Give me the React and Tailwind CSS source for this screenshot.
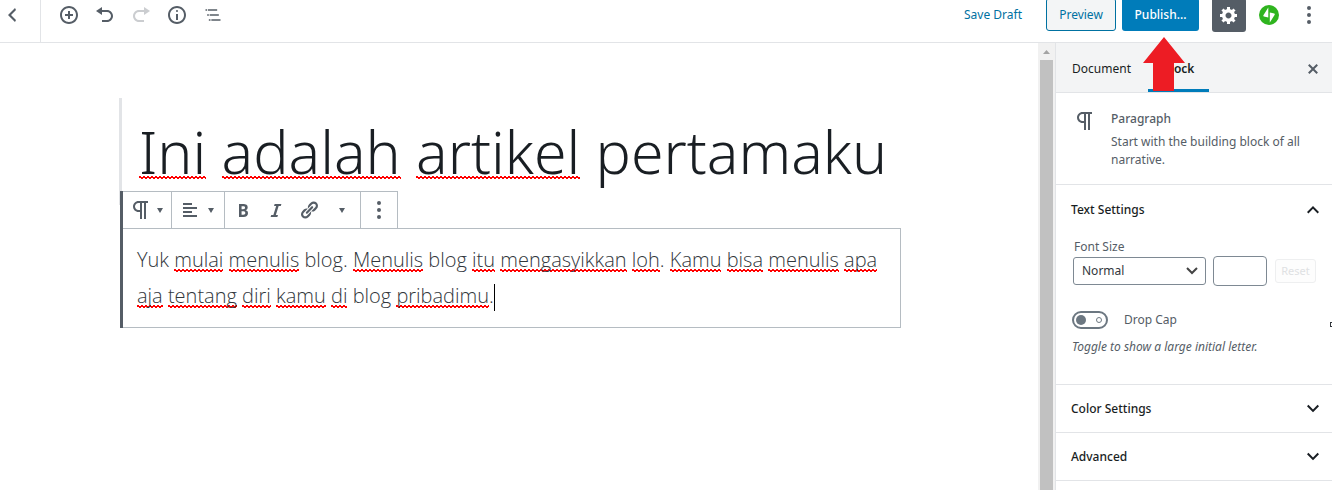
import React, { useState } from 'react';

const icons = {
  back: 'M14 5l-5 5 5 5-1 2-7-7 7-7z',
  insert:
    'M10 1c-5 0-9 4-9 9s4 9 9 9 9-4 9-9-4-9-9-9zm0 16c-3.9 0-7-3.1-7-7s3.1-7 7-7 7 3.1 7 7-3.1 7-7 7zm1-11H9v3H6v2h3v3h2v-3h3V9h-3V6z',
  undo: 'M12 5H7V2L1 6l6 4V7h5c2.2 0 4 1.8 4 4s-1.8 4-4 4H7v2h5c3.3 0 6-2.7 6-6s-2.7-6-6-6z',
  redo: 'M8 5h5V2l6 4-6 4V7H8c-2.2 0-4 1.8-4 4s1.8 4 4 4h5v2H8c-3.3 0-6-2.7-6-6s2.7-6 6-6z',
  info: 'M9 15h2V9H9v6zm1-10c-.5 0-1 .5-1 1s.5 1 1 1 1-.5 1-1-.5-1-1-1zm0-4c-5 0-9 4-9 9s4 9 9 9 9-4 9-9-4-9-9-9zm0 16c-3.9 0-7-3.1-7-7s3.1-7 7-7 7 3.1 7 7-3.1 7-7 7z',
  outline: 'M5 5H3v2h2V5zm3 8h11v-2H8v2zm9-8H6v2h11V5zM7 11H5v2h2v-2zm0 8h2v-2H7v2zm3-2v2h11v-2H10z',
  more: 'M10 1a2 2 0 100 4 2 2 0 000-4zm0 7a2 2 0 100 4 2 2 0 000-4zm0 7a2 2 0 100 4 2 2 0 000-4z',
  settings:
    'M18 12h-2.18c-.17.7-.44 1.35-.81 1.93l1.54 1.54-2.1 2.1-1.54-1.54c-.58.36-1.23.63-1.91.79V19H8v-2.18c-.68-.16-1.33-.43-1.91-.79l-1.54 1.54-2.12-2.12 1.54-1.54c-.36-.58-.63-1.23-.79-1.91H1V9.03h2.17c.16-.7.44-1.35.8-1.94L2.43 5.55l2.1-2.1 1.54 1.54c.58-.37 1.24-.64 1.93-.81V2h3v2.18c.68.16 1.33.43 1.91.79l1.54-1.54 2.12 2.12-1.54 1.54c.36.59.64 1.24.8 1.94H18V12zm-8.5 1.5c1.66 0 3-1.34 3-3s-1.34-3-3-3-3 1.34-3 3 1.34 3 3 3z',
  close:
    'M14.95 6.46L11.41 10l3.54 3.54-1.41 1.41L10 11.42l-3.53 3.53-1.42-1.42L8.58 10 5.05 6.47l1.42-1.42L10 8.58l3.54-3.53z',
  paragraph: 'M11 5v7H9.5C7.6 12 6 10.4 6 8.5S7.6 5 9.5 5H11m8-2H9.5C6.5 3 4 5.5 4 8.5S6.5 14 9.5 14H11v7h2V5h2v16h2V5h2V3z',
  alignLeft: 'M12 5V3H3v2h9zm5 4V7H3v2h14zm-5 4v-2H3v2h9zm5 4v-2H3v2h14z',
  bold: 'M6 4v13h4.54c1.37 0 2.46-.33 3.26-1 .8-.66 1.2-1.58 1.2-2.77 0-.84-.17-1.51-.51-2.01s-.9-.85-1.67-1.03v-.09c.57-.1 1.02-.4 1.36-.9s.51-1.13.51-1.91c0-1.14-.39-1.98-1.17-2.5C12.75 4.26 11.5 4 9.78 4H6zm2.57 5.15V6.26h1.36c.73 0 1.27.11 1.61.32.34.22.51.58.51 1.07 0 .54-.16.92-.47 1.15s-.82.35-1.51.35h-1.5zm0 2.19h1.6c1.44 0 2.16.53 2.16 1.61 0 .6-.17 1.05-.51 1.34s-.86.43-1.57.43H8.57v-3.38z',
  italic: 'M14.78 6h-2.13l-2.8 9h2.12l-.62 2H4.6l.62-2h2.14l2.8-9H8.03l.62-2h6.75z',
  link: 'M17.74 2.76c1.68 1.69 1.68 4.41 0 6.1l-1.53 1.52c-1.12 1.12-2.7 1.47-4.14 1.09l2.62-2.61.76-.77.76-.76c.84-.84.84-2.2 0-3.04-.84-.85-2.2-.85-3.04 0l-.77.76-3.38 3.38c-.37-1.44-.02-3.02 1.1-4.14l1.52-1.53c1.69-1.68 4.42-1.68 6.1 0zM8.59 13.43l5.34-5.34c.42-.42.42-1.1 0-1.52-.44-.43-1.13-.39-1.53 0l-5.33 5.34c-.42.42-.42 1.1 0 1.52.44.43 1.13.39 1.52 0zm-.76 2.29l4.14-4.15c.38 1.44.03 3.02-1.09 4.14l-1.52 1.53c-1.69 1.68-4.41 1.68-6.1 0-1.68-1.68-1.68-4.42 0-6.1l1.53-1.52c1.12-1.12 2.7-1.47 4.14-1.1l-4.14 4.15c-.85.84-.85 2.2 0 3.05.84.84 2.2.84 3.04 0z',
  chevronDown: 'M7.41 7.84L12 12.42l4.59-4.58L18 9.25l-6 6-6-6z',
  chevronUp: 'M12 8l-6 6 1.41 1.41L12 10.83l4.59 4.58L18 14z',
};

const Icon = ({ name, box = 20, className = 'size-5' }) => (
  <svg viewBox={`0 0 ${box} ${box}`} className={`${className} shrink-0 fill-current`} aria-hidden="true">
    <path d={icons[name]} />
  </svg>
);

const Caret = () => (
  <svg viewBox="0 0 6 5" className="h-[5px] w-1.5 shrink-0 fill-current" aria-hidden="true">
    <path d="M0 0h6L3 5z" />
  </svg>
);

// Words the spell checker marks in red, with a fine zigzag just below the baseline
const Miss = ({ children }) => (
  <span className="bg-[linear-gradient(45deg,transparent_36%,#f00_36%,#f00_64%,transparent_64%),linear-gradient(-45deg,transparent_36%,#f00_36%,#f00_64%,transparent_64%)] bg-[length:4px_3px,4px_3px] bg-[position:0_calc(1.069em+2px),2px_calc(1.069em+2px)] bg-repeat-x">
    {children}
  </span>
);

const IconButton = ({ label, disabled, children }) => (
  <button
    aria-label={label}
    disabled={disabled}
    className="flex size-9 items-center justify-center disabled:opacity-30"
  >
    {children}
  </button>
);

const JetpackIcon = () => (
  <svg viewBox="0 0 20 20" className="size-5" aria-hidden="true">
    <circle cx="10" cy="10" r="10" fill="#2fb41f" />
    <path d="M9.3 2.4v10.1l-4.4-1.1c-.5-.2-.7-.6-.5-1.1zM10.8 17.6V7.5l4.4 1.1c.5.2.7.6.5 1.1z" fill="#fff" />
  </svg>
);

const Header = () => (
  <header className="h-[43px] shrink-0 overflow-hidden">
    <div className="-mt-[13px] flex h-14 items-center border-b border-[#e2e4e7] bg-white">
      <a href="#posts" aria-label="View Posts" className="flex h-full w-[41px] items-center border-r border-[#e2e4e7] pl-0.5">
        <Icon name="back" />
      </a>
      <div className="flex pl-2.5">
        <IconButton label="Add block"><Icon name="insert" /></IconButton>
        <IconButton label="Undo"><Icon name="undo" /></IconButton>
        <IconButton label="Redo" disabled><Icon name="redo" /></IconButton>
        <IconButton label="Content structure"><Icon name="info" /></IconButton>
        <IconButton label="Block navigation"><Icon name="outline" box={24} /></IconButton>
      </div>
      <div className="ml-auto flex items-center pr-[5px]">
        <button className="mr-6 text-[#0071a1]">Save Draft</button>
        <button className="mr-1.5 h-[33px] w-[70px] rounded-[3px] border border-[#0071a1] bg-[#f3f5f6] text-[#0071a1]">
          Preview
        </button>
        <button className="mr-[13px] h-[33px] w-[77px] rounded-[3px] bg-[#007cba] font-medium text-white">Publish...</button>
        <button aria-label="Settings" className="mr-[5px] flex size-[34px] items-center justify-center rounded-[3px] bg-[#555d66] text-white">
          <Icon name="settings" />
        </button>
        <IconButton label="Jetpack"><JetpackIcon /></IconButton>
        <div className="ml-1"><IconButton label="More tools"><Icon name="more" /></IconButton></div>
      </div>
    </div>
  </header>
);

const Toolbar = () => (
  <div className="flex h-[37px] w-fit border-t border-[#b5bcc2] bg-white text-[#555d66]">
    <button aria-label="Change block type" className="flex w-12 items-center gap-1 pl-1.5">
      <Icon name="paragraph" box={24} className="size-6" />
      <Caret />
    </button>
    <button aria-label="Change alignment" className="flex w-[53px] items-center gap-2 border-l border-[#b5bcc2] pl-2">
      <Icon name="alignLeft" />
      <Caret />
    </button>
    <div className="flex border-x border-[#b5bcc2]">
      <button aria-label="Bold" className="flex w-9 items-center justify-center"><Icon name="bold" /></button>
      <button aria-label="Italic" className="flex w-[30px] items-center justify-center"><Icon name="italic" /></button>
      <button aria-label="Link" className="flex w-9 items-center justify-center"><Icon name="link" /></button>
      <button aria-label="More rich text controls" className="flex w-[33px] items-center pl-3"><Caret /></button>
    </div>
    <button aria-label="More options" className="flex w-[37px] items-center justify-center border-r border-[#b5bcc2]">
      <Icon name="more" />
    </button>
  </div>
);

const Editor = () => (
  <main className="min-w-0 flex-1 pt-[55px] pr-[137px] pl-[119px]">
    <h1 className="-mb-3.5 h-[107px] border-l-[3px] border-[#e2e4e7] pt-[13px] pl-[17px] font-['Noto_Sans',sans-serif] text-[59px] leading-[80px] font-light text-[#191e23]">
      <Miss>Ini</Miss> <Miss>adalah</Miss> <Miss>artikel</Miss> pertamaku
    </h1>
    <section className="relative ml-px border-l-[3px] border-[#555d66]">
      <Toolbar />
      <p className="border border-l-0 border-[#b5bcc2] px-3.5 py-[13px] font-['Open_Sans',sans-serif] text-[20px] leading-9 font-light text-[#32373c]">
        Yuk <Miss>mulai</Miss> <Miss>menulis</Miss> blog. <Miss>Menulis</Miss> blog <Miss>itu</Miss>{' '}
        <Miss>mengasyikkan</Miss> <Miss>loh</Miss>. <Miss>Kamu</Miss> <Miss>bisa</Miss> <Miss>menulis</Miss>{' '}
        <Miss>apa</Miss> <Miss>aja</Miss> <Miss>tentang</Miss> <Miss>diri</Miss> <Miss>kamu</Miss> <Miss>di</Miss>{' '}
        blog <Miss>pribadimu</Miss>.
        <span className="inline-block h-[27px] w-px bg-black align-middle" />
      </p>
    </section>
  </main>
);

const Scrollbar = () => (
  <div className="flex w-[17px] shrink-0 flex-col items-center bg-[#f1f1f1]" aria-hidden="true">
    <div className="flex h-[17px] items-center">
      <svg viewBox="0 0 7 4" className="h-1 w-[7px] fill-[#a3a3a3]"><path d="M0 4L3.5 0 7 4z" /></svg>
    </div>
    <div className="w-[13px] flex-1 bg-[#c1c1c1]" />
  </div>
);

const PanelTitle = ({ title, open, onClick }) => (
  <button
    onClick={onClick}
    aria-expanded={open}
    className="flex h-[47px] w-full items-center justify-between pr-[7px] pl-[15px] font-medium text-[#191e23]"
  >
    {title}
    <Icon name={open ? 'chevronUp' : 'chevronDown'} box={24} className="size-6" />
  </button>
);

const TextSettings = () => {
  const [dropCap, setDropCap] = useState(false);

  return (
    <div className="px-4 pb-6">
      <label htmlFor="font-size" className="block pt-[5px] pl-0.5 leading-[18px]">Font Size</label>
      <div className="flex items-center pl-px">
        <div className="relative">
          <select
            id="font-size"
            className="block h-7 w-[133px] appearance-none rounded-[3px] border border-[#7e8993] bg-white pl-2 text-[#32373c]"
          >
            <option>Normal</option>
            <option>Small</option>
            <option>Large</option>
          </select>
          <svg viewBox="0 0 12 8" className="pointer-events-none absolute top-2.5 right-2 h-2 w-3 fill-none stroke-[#444] stroke-2" aria-hidden="true">
            <path d="M1 1l5 5 5-5" />
          </svg>
        </div>
        <input aria-label="Custom size" className="ml-[7px] h-[30px] w-[54px] rounded-[4px] border border-[#7e8993] px-2" />
        <button disabled className="ml-2 h-6 w-11 rounded-[3px] border border-[#eeeff0] bg-[#fdfdfd] text-[11px] text-[#dfe1e3]">
          Reset
        </button>
      </div>
      <div className="mt-[25px] flex h-[18px] items-center">
        <span className="relative flex h-[18px] w-9 items-center justify-between rounded-full border-2 border-[#6c7781] px-0.5">
          <input
            id="drop-cap"
            type="checkbox"
            checked={dropCap}
            onChange={() => setDropCap(!dropCap)}
            className="absolute inset-0 opacity-0"
          />
          <span className="size-2.5 rounded-full bg-[#6c7781]" />
          <span className="mr-0.5 size-1.5 rounded-full border border-[#6c7781]" />
        </span>
        <label htmlFor="drop-cap" className="pl-4">Drop Cap</label>
      </div>
      <p className="mt-2 leading-5 italic">Toggle to show a large initial letter.</p>
    </div>
  );
};

const Sidebar = () => {
  const [open, setOpen] = useState('text');
  const toggle = (id) => setOpen(open === id ? null : id);

  return (
    <aside className="w-[277px] shrink-0 border-l border-[#e2e4e7] bg-white text-[#555d66]">
      <div className="flex h-[50px] items-stretch border-b border-[#e2e4e7] bg-[#f3f4f5] text-[#191e23]">
        <button className="w-[91px] pt-0.5">Document</button>
        <button className="ml-px w-[61px] border-b-[3px] border-[#007cba] pt-[5px] font-semibold">Block</button>
        <button aria-label="Close settings" className="mr-[9px] ml-auto pt-0.5 text-[#555d66]"><Icon name="close" /></button>
      </div>
      <div className="flex h-[92px] gap-[14px] border-b border-[#e2e4e7] pt-4 pr-4 pl-[17px]">
        <Icon name="paragraph" box={24} className="size-6" />
        <div className="pt-px leading-[18px]">
          <h2 className="mb-[5px] font-medium">Paragraph</h2>
          <p>Start with the building block of all narrative.</p>
        </div>
      </div>
      <div className="min-h-[200px] border-b border-[#e2e4e7] pt-px">
        <PanelTitle title="Text Settings" open={open === 'text'} onClick={() => toggle('text')} />
        {open === 'text' && <TextSettings />}
      </div>
      <div className="border-b border-[#e2e4e7]">
        <PanelTitle title="Color Settings" open={open === 'color'} onClick={() => toggle('color')} />
      </div>
      <div className="border-b border-[#e2e4e7]">
        <PanelTitle title="Advanced" open={open === 'advanced'} onClick={() => toggle('advanced')} />
      </div>
    </aside>
  );
};

export default function App() {
  return (
    <div className="relative flex h-screen flex-col overflow-hidden bg-white font-['Noto_Sans',sans-serif] text-[12px] text-[#555d66]">
      <Header />
      <div className="flex min-h-0 flex-1">
        <Editor />
        <Scrollbar />
        <Sidebar />
      </div>
      {/* Arrow pointing at the publish button */}
      <svg viewBox="0 0 42 54" className="absolute top-[37px] right-[147px] h-[54px] w-[42px] fill-[#ed1c24]" aria-hidden="true">
        <path d="M21 0l21 26H31v28H10V26H0z" />
      </svg>
      <div className="absolute top-[322px] right-0 h-[5px] w-0.5 border border-r-0 border-[#32373c]" />
    </div>
  );
}
